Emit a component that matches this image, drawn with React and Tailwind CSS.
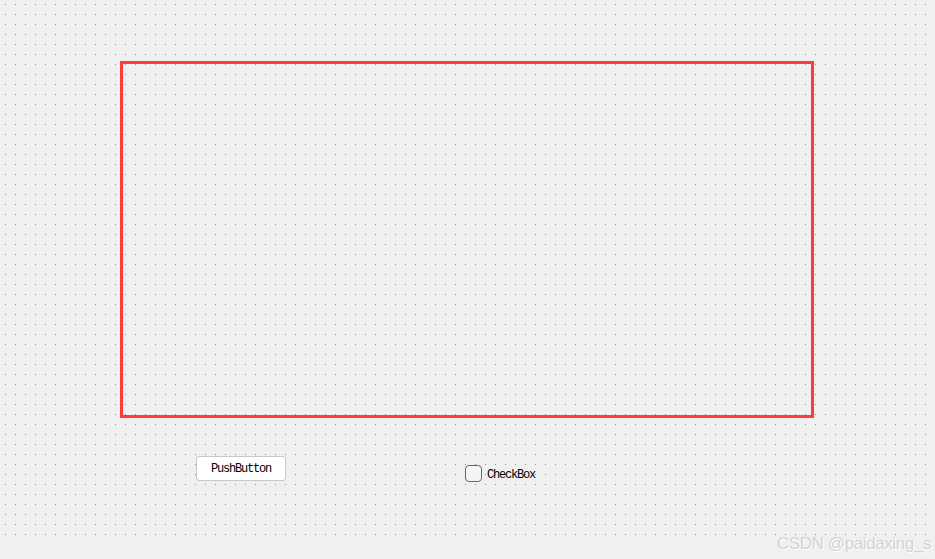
export default function App() {
  return (
    <div className="relative w-[935px] h-[559px] overflow-hidden bg-[#f0f0f0]">
      <div className="h-[540px] bg-[radial-gradient(circle_at_5.5px_4.5px,#8c8c8c_0.6px,transparent_0.7px)] bg-[size:10px_10px]">
        <div className="pt-[61px] pl-[120px]">
          <div className="w-[694px] h-[357px] border-[3px] border-[#ff3b3b]" />
        </div>
        <div className="flex items-start mt-[38px]">
          <button className="ml-[196px] w-[90px] h-[25px] bg-white border border-[#c8c8c8] rounded-[3px] text-[12px] tracking-[-1.2px] text-black font-['Liberation_Mono',monospace] flex items-center justify-center">
            PushButton
          </button>
          <label className="ml-[179px] mt-[9px] flex items-start gap-[5px] text-[12px] leading-[18px] tracking-[-1.2px] text-black font-['Liberation_Mono',monospace]">
            <span className="w-[17px] h-[17px] border border-[#666] rounded-[4px] bg-[#f5f5f5]" />
            <span className="mt-[1px]">CheckBox</span>
          </label>
        </div>
      </div>
      <div className="absolute right-[4px] bottom-[3px] text-[17px] tracking-[-0.4px] text-[#d3d3d3] font-['Liberation_Sans',Arial,sans-serif] [text-shadow:1px_1px_0_#ffffff]">
        CSDN @paidaxing_s
      </div>
    </div>
  );
}
